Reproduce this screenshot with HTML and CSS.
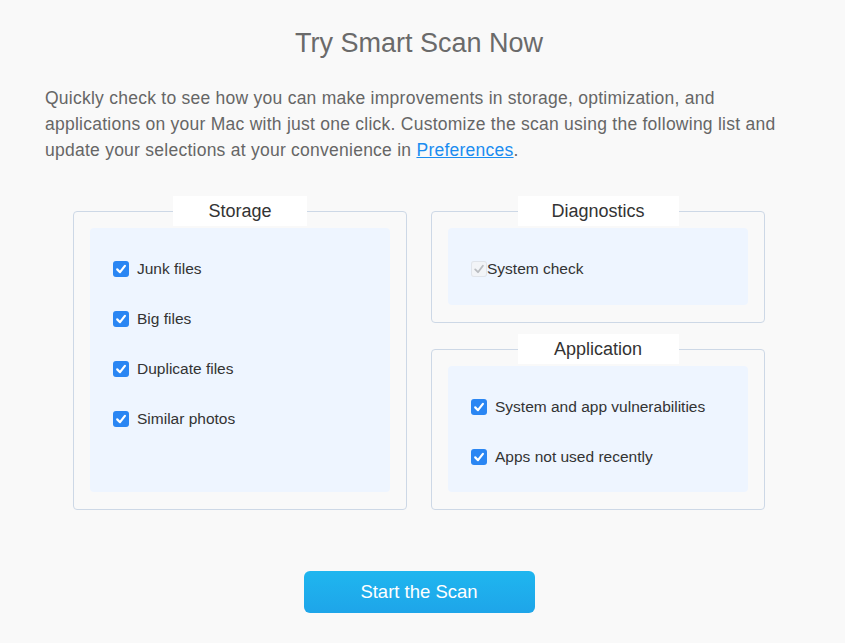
FILE: index.html
```html
<!DOCTYPE html>
<html lang="en">
<head>
  <meta charset="UTF-8">
  <meta name="viewport" content="width=device-width, initial-scale=1.0">
  <title>Smart Scan</title>
  <link rel="stylesheet" href="styles.css">
</head>
<body>

  <main class="page">
    <h1 class="title">Try Smart Scan Now</h1>

    <p class="intro">
      Quickly check to see how you can make improvements in storage, optimization, and<br>
      applications on your Mac with just one click. Customize the scan using the following list and<br>
      update your selections at your convenience in <a href="#">Preferences</a>.
    </p>

    <div class="groups">
      <fieldset class="group">
        <legend>Storage</legend>
        <div class="panel">
          <label class="item"><span class="box"><svg viewBox="0 0 16 16"><path d="M4.2 8.4 L7 11.2 L11.9 4.8"/></svg></span>Junk files</label>
          <label class="item"><span class="box"><svg viewBox="0 0 16 16"><path d="M4.2 8.4 L7 11.2 L11.9 4.8"/></svg></span>Big files</label>
          <label class="item"><span class="box"><svg viewBox="0 0 16 16"><path d="M4.2 8.4 L7 11.2 L11.9 4.8"/></svg></span>Duplicate files</label>
          <label class="item"><span class="box"><svg viewBox="0 0 16 16"><path d="M4.2 8.4 L7 11.2 L11.9 4.8"/></svg></span>Similar photos</label>
        </div>
      </fieldset>

      <div class="side">
        <fieldset class="group">
          <legend class="wide">Diagnostics</legend>
          <div class="panel short">
            <label class="item disabled"><span class="box"><svg viewBox="0 0 16 16"><path d="M4.2 8.4 L7 11.2 L11.9 4.8"/></svg></span>System check</label>
          </div>
        </fieldset>

        <fieldset class="group">
          <legend class="wide">Application</legend>
          <div class="panel">
            <label class="item"><span class="box"><svg viewBox="0 0 16 16"><path d="M4.2 8.4 L7 11.2 L11.9 4.8"/></svg></span>System and app vulnerabilities</label>
            <label class="item"><span class="box"><svg viewBox="0 0 16 16"><path d="M4.2 8.4 L7 11.2 L11.9 4.8"/></svg></span>Apps not used recently</label>
          </div>
        </fieldset>
      </div>
    </div>

    <div class="actions">
      <button class="scan" type="button">Start the Scan</button>
    </div>
  </main>

</body>
</html>
```

FILE: styles.css
```css
body {
  margin: 0;
  background-color: #f9f9f9;
  font-family: "Liberation Sans", Arial, sans-serif;
  color: #333;
}

.page {
  width: 748px;
  margin-left: 45px;
  padding-top: 28px;
}

.title {
  margin: 0;
  text-align: center;
  font-size: 27px;
  font-weight: normal;
  line-height: 30px;
  color: #6a6a6a;
}

.intro {
  margin: 27px 0 0;
  font-size: 17.5px;
  letter-spacing: 0.25px;
  line-height: 26px;
  color: #666;
  white-space: nowrap;
}

.intro a {
  color: #1a8cf0;
}

.groups {
  display: grid;
  grid-template-columns: 334px 334px;
  column-gap: 24px;
  margin: 33px 28px 0;
}

.side {
  display: flex;
  flex-direction: column;
  gap: 11px;
}

.group {
  display: flex;
  flex-direction: column;
  margin: 0;
  min-width: 0;
  padding: 2px 16px 17px;
  border: 1px solid #cdd8e6;
  border-radius: 4px;
}

.group legend {
  width: 134px;
  margin: 0 auto;
  padding: 0;
  height: 30px;
  line-height: 30px;
  text-align: center;
  background-color: #fff;
  font-size: 18px;
  color: #333;
}

.group legend.wide {
  width: 161px;
}

.panel {
  flex: 1;
  display: flex;
  flex-direction: column;
  gap: 32px;
  padding: 32px 0 26px 23px;
  background-color: #eef5ff;
  border-radius: 4px;
}

.panel.short {
  padding-bottom: 27px;
}

.item {
  display: flex;
  align-items: center;
  gap: 8px;
  height: 18px;
  font-size: 15.5px;
  color: #333;
}

.box {
  width: 16px;
  height: 16px;
  border-radius: 3px;
  background-color: #2a86f3;
  display: flex;
}

.box svg {
  width: 16px;
  height: 16px;
  fill: none;
  stroke: #fff;
  stroke-width: 2.2;
  stroke-linecap: round;
  stroke-linejoin: round;
}

.item.disabled {
  gap: 0;
}

.item.disabled .box {
  background-color: #f2f4f7;
  box-shadow: inset 0 0 0 1px #e0e4ea;
}

.item.disabled .box svg {
  stroke: #b9bcc0;
  stroke-width: 1.8;
}

.actions {
  display: flex;
  justify-content: center;
  margin-top: 61px;
}

.scan {
  width: 231px;
  height: 42px;
  border: none;
  border-radius: 6px;
  background: linear-gradient(#1fb6ef, #1ea5e9);
  color: #fff;
  font-family: "Liberation Sans", Arial, sans-serif;
  font-size: 18.5px;
  cursor: pointer;
}
```
